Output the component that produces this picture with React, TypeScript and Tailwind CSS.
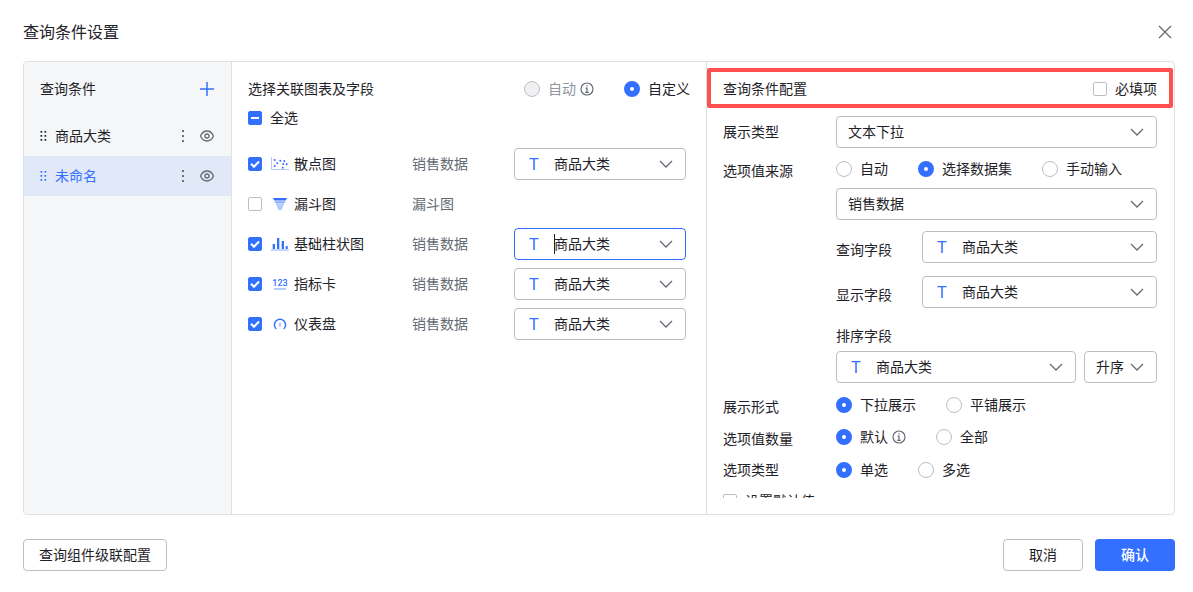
import { useState } from "react";
import type { ReactNode } from "react";
import clsx from "clsx";

const charts = [
  { name: "散点图", dataset: "销售数据", icon: "scatter", checked: true, bound: true },
  { name: "漏斗图", dataset: "漏斗图", icon: "funnel", checked: false, bound: false },
  { name: "基础柱状图", dataset: "销售数据", icon: "bar", checked: true, bound: true, focused: true },
  { name: "指标卡", dataset: "销售数据", icon: "metric", checked: true, bound: true },
  { name: "仪表盘", dataset: "销售数据", icon: "gauge", checked: true, bound: true },
];

const scatterDots = [
  [4.7, 4],
  [4.7, 10],
  [7.3, 7.3],
  [10.3, 4.7],
  [13.3, 8],
  [12.7, 11.7],
  [14.3, 5],
  [16.7, 8.3],
];

function ChartIcon({ type }: { type: string }) {
  return (
    <svg className="w-5 h-4 shrink-0" viewBox="0 0 20 16" fill="none" aria-hidden="true">
      {type === "scatter" && (
        <>
          <path d="M1.500 1v12.500H19" stroke="#b4caff" />
          {scatterDots.map(([x, y]) => (
            <circle key={`${x}-${y}`} cx={x} cy={y} r="1" fill="#3370ff" />
          ))}
        </>
      )}
      {type === "funnel" && (
        <>
          <path d="M3 2h14l-1.200 2.600H4.200z" fill="#3370ff" />
          <path d="M4.600 5.200h10.800l-1 2H5.600z" fill="#85aaff" />
          <path d="M5.700 7.500h8.600l-2.100 4.700V14H7.800v-1.800z" fill="#b4caff" />
        </>
      )}
      {type === "bar" && (
        <>
          <path d="M1 14h18" stroke="#b4caff" strokeWidth="1.300" />
          <g fill="#3370ff">
            <rect x="2.700" y="8" width="2.300" height="5" />
            <rect x="7" y="2" width="2.300" height="11" />
            <rect x="11.700" y="5" width="2.300" height="8" />
            <rect x="15.700" y="10" width="2" height="3" />
          </g>
        </>
      )}
      {type === "metric" && (
        <>
          <text
            x="10"
            y="10"
            textAnchor="middle"
            fontSize="9"
            fontWeight="500"
            fontFamily="Roboto, sans-serif"
            fill="#3370ff"
          >
            123
          </text>
          <path d="M4 13h12" stroke="#85aaff" strokeWidth="1.200" />
        </>
      )}
      {type === "gauge" && (
        <>
          <path d="M6.200 13A5.600 5.600 0 1 1 13.800 13" stroke="#3370ff" strokeWidth="1.400" />
          <path d="M10 7v3.500" stroke="#85aaff" strokeWidth="1.500" />
        </>
      )}
    </svg>
  );
}

function ChevronIcon() {
  return (
    <svg className="w-3.5 h-3.5 shrink-0 pointer-events-none" viewBox="0 0 14 14" fill="none" aria-hidden="true">
      <path d="M1 4l6 6 6-6" stroke="#646a73" strokeWidth="1.300" />
    </svg>
  );
}

function InfoIcon() {
  return (
    <svg className="w-3.5 h-3.5 ml-1 shrink-0" viewBox="0 0 14 14" fill="none" stroke="#646a73" aria-hidden="true">
      <circle cx="7" cy="7" r="6" strokeWidth="1.200" />
      <path d="M7 3.200v1.400M5.600 6.200H7v4M5.200 10.300h3.600" strokeWidth="1.200" />
    </svg>
  );
}

function EyeIcon() {
  return (
    <svg className="size-4" viewBox="0 0 16 16" fill="none" stroke="#646a73" strokeWidth="1.300" aria-hidden="true">
      <path d="M1.500 8C3 4.700 5.300 3 8 3s5 1.700 6.500 5c-1.500 3.300-3.800 5-6.500 5S3 11.300 1.500 8z" />
      <circle cx="8" cy="8" r="2" />
    </svg>
  );
}

function MoreIcon() {
  return (
    <svg className="size-4" viewBox="0 0 16 16" fill="#646a73" aria-hidden="true">
      <rect x="7" y="2" width="2" height="2" rx="0.500" />
      <rect x="7" y="7" width="2" height="2" rx="0.500" />
      <rect x="7" y="12" width="2" height="2" rx="0.500" />
    </svg>
  );
}

function DragIcon() {
  return (
    <svg className="w-[7px] h-3 shrink-0" viewBox="0 0 7 12" fill="currentColor" aria-hidden="true">
      {[1, 5, 9].map((y) => (
        <g key={y}>
          <rect x="0.500" y={y} width="1.700" height="1.700" />
          <rect x="4.500" y={y} width="1.700" height="1.700" />
        </g>
      ))}
    </svg>
  );
}

type SelectProps = {
  label: string;
  value: string;
  typed?: boolean;
  focused?: boolean;
  className?: string;
};

function Select({ label, value, typed, focused, className }: SelectProps) {
  return (
    <div
      className={clsx(
        "flex h-8 min-w-0 items-center rounded border bg-white pl-[11px] pr-3",
        focused ? "border-[#3370ff]" : "border-[#bbbfc4]",
        className,
      )}
    >
      {typed && (
        <span className="mr-3 w-4 pt-0.5 text-center text-base text-[#3370ff]" aria-hidden="true">
          T
        </span>
      )}
      {focused && <span className="-mr-px h-5 w-px bg-[#1f2329]" />}
      <select aria-label={label} defaultValue={value} className="min-w-0 flex-1 appearance-none bg-transparent outline-none">
        <option>{value}</option>
      </select>
      <ChevronIcon />
    </div>
  );
}

type RadioProps = {
  name: string;
  label: string;
  checked?: boolean;
  disabled?: boolean;
  info?: boolean;
};

function Radio({ name, label, checked, disabled, info }: RadioProps) {
  return (
    <label className={clsx("flex items-center whitespace-nowrap", disabled && "text-[#8f959e]")}>
      <input
        type="radio"
        name={name}
        defaultChecked={checked}
        disabled={disabled}
        className="mr-2 size-4 shrink-0 appearance-none rounded-full border border-[#bbbfc4] bg-white checked:border-[6px] checked:border-[#3370ff] disabled:bg-[#eff0f1]"
      />
      {label}
      {info && <InfoIcon />}
    </label>
  );
}

type CheckboxProps = {
  checked?: boolean;
  mixed?: boolean;
  children: ReactNode;
};

function Checkbox({ checked, mixed, children }: CheckboxProps) {
  const [on, setOn] = useState(!!checked);
  return (
    <label className="flex items-center gap-2 whitespace-nowrap">
      <span className="grid size-3.5 shrink-0">
        <input
          type="checkbox"
          checked={on}
          onChange={(e) => setOn(e.target.checked)}
          className="col-start-1 row-start-1 size-3.5 appearance-none rounded-xs border border-[#bbbfc4] bg-white checked:border-[#3370ff] checked:bg-[#3370ff]"
        />
        {on && (
          <svg className="pointer-events-none col-start-1 row-start-1 size-3.5" viewBox="0 0 14 14" fill="none" stroke="#fff" strokeWidth="2">
            {mixed ? <path d="M3 7h8" /> : <path d="M3 6.700l3 3 5-5.200" />}
          </svg>
        )}
      </span>
      {children}
    </label>
  );
}

function Row({ label, center, children }: { label: string; center?: boolean; children: ReactNode }) {
  return (
    <div className={clsx("grid min-h-6 grid-cols-[113px_1fr]", center && "items-center")}>
      <span className={clsx(!center && "pt-0.5")}>{label}</span>
      {children}
    </div>
  );
}

function Sidebar() {
  const [active, setActive] = useState("未命名");
  return (
    <aside className="border-r border-[#dee0e3] bg-[#f5f6f7]">
      <div className="flex h-[54px] items-center justify-between px-4">
        <h2>查询条件</h2>
        <button type="button" aria-label="添加">
          <svg className="size-4" viewBox="0 0 16 16" stroke="#3370ff" strokeWidth="1.500">
            <path d="M8 1v14M1 8h14" />
          </svg>
        </button>
      </div>
      <ul>
        {["商品大类", "未命名"].map((name) => (
          <li
            key={name}
            className={clsx("flex h-10 items-center gap-2 px-4", active === name && "bg-[#e1e8f8] text-[#3370ff]")}
          >
            <DragIcon />
            <button type="button" className="flex-1 text-left" onClick={() => setActive(name)}>
              {name}
            </button>
            <button type="button" aria-label="更多">
              <MoreIcon />
            </button>
            <button type="button" aria-label="显示">
              <EyeIcon />
            </button>
          </li>
        ))}
      </ul>
    </aside>
  );
}

function ChartFields() {
  return (
    <section className="border-r border-[#dee0e3] pt-4">
      <div className="flex items-center justify-between px-4">
        <h2>选择关联图表及字段</h2>
        <div className="flex gap-[30px]">
          <Radio name="bind" label="自动" disabled info />
          <Radio name="bind" label="自定义" checked />
        </div>
      </div>
      <div className="mt-[7px] px-4">
        <Checkbox checked mixed>
          全选
        </Checkbox>
      </div>
      <ul className="mt-[15px] pl-4 pr-5">
        {charts.map((c) => (
          <li key={c.name} className="grid h-10 grid-cols-[164px_102px_1fr] items-center">
            <Checkbox checked={c.checked}>
              <span className="flex items-center gap-1">
                <ChartIcon type={c.icon} />
                {c.name}
              </span>
            </Checkbox>
            <span className="text-[#646a73]">{c.dataset}</span>
            {c.bound && <Select label={`${c.name}字段`} value="商品大类" typed focused={c.focused} />}
          </li>
        ))}
      </ul>
    </section>
  );
}

function ConditionConfig() {
  return (
    <section className="flex min-h-0 flex-col pb-4">
      <div className="mr-px mt-1.5 flex h-10 shrink-0 items-center justify-between rounded-xs border-[4px] border-[#ff5050] px-3 pt-0.5">
        <h2>查询条件配置</h2>
        <Checkbox>必填项</Checkbox>
      </div>

      <div className="min-h-0 flex-1 overflow-y-auto pl-4 pr-[17px] pt-2 [scrollbar-width:none]">
        <Row label="展示类型" center>
          <Select label="展示类型" value="文本下拉" />
        </Row>

        <div className="mt-[10px]">
          <Row label="选项值来源">
            <div>
              <div className="flex gap-[30px]">
                <Radio name="source" label="自动" />
                <Radio name="source" label="选择数据集" checked />
                <Radio name="source" label="手动输入" />
              </div>
              <Select label="数据集" value="销售数据" className="mt-2" />
              <div className="mt-[11px] grid grid-cols-[86px_1fr] gap-y-[13px]">
                <span className="pt-2">查询字段</span>
                <Select label="查询字段" value="商品大类" typed />
                <span className="pt-2">显示字段</span>
                <Select label="显示字段" value="商品大类" typed />
              </div>
              <p className="mt-[17px]">排序字段</p>
              <div className="mt-1 flex gap-2">
                <Select label="排序字段" value="商品大类" typed className="flex-1" />
                <Select label="排序方式" value="升序" className="w-[73px]" />
              </div>
            </div>
          </Row>
        </div>

        <div className="mt-[11px] flex flex-col gap-2">
          <Row label="展示形式">
            <div className="flex h-[22px] gap-[30px]">
              <Radio name="display" label="下拉展示" checked />
              <Radio name="display" label="平铺展示" />
            </div>
          </Row>
          <Row label="选项值数量">
            <div className="flex h-[22px] gap-[30px]">
              <Radio name="count" label="默认" checked info />
              <Radio name="count" label="全部" />
            </div>
          </Row>
          <Row label="选项类型" center>
            <div className="flex h-[22px] gap-[30px]">
              <Radio name="mode" label="单选" checked />
              <Radio name="mode" label="多选" />
            </div>
          </Row>
          <Checkbox>设置默认值</Checkbox>
        </div>
      </div>
    </section>
  );
}

export default function App() {
  return (
    <div className="flex h-screen flex-col bg-white pb-[21px] pl-[23px] pr-[18px] font-['Liberation_Sans','Noto_Sans_CJK_SC',sans-serif] text-sm leading-[22px] text-[#1f2329]">
      <header className="flex h-[61px] shrink-0 items-center justify-between pt-[3px]">
        <h1 className="pt-0.5 text-base">查询条件设置</h1>
        <button type="button" aria-label="关闭">
          <svg className="size-5" viewBox="0 0 20 20" stroke="#646a73" strokeWidth="1.300">
            <path d="M4 4l12 12M16 4L4 16" />
          </svg>
        </button>
      </header>

      <main className="grid min-h-0 flex-1 grid-cols-[208px_475fr_467fr] grid-rows-[minmax(0,1fr)] overflow-hidden rounded border border-[#dee0e3]">
        <Sidebar />
        <ChartFields />
        <ConditionConfig />
      </main>

      <footer className="mt-6 flex shrink-0 gap-3">
        <button type="button" className="mr-auto h-8 rounded border border-[#bbbfc4] px-[15px]">
          查询组件级联配置
        </button>
        <button type="button" className="h-8 w-20 rounded border border-[#bbbfc4]">
          取消
        </button>
        <button type="button" className="h-8 w-20 rounded bg-[#3370ff] font-medium text-white">
          确认
        </button>
      </footer>
    </div>
  );
}
